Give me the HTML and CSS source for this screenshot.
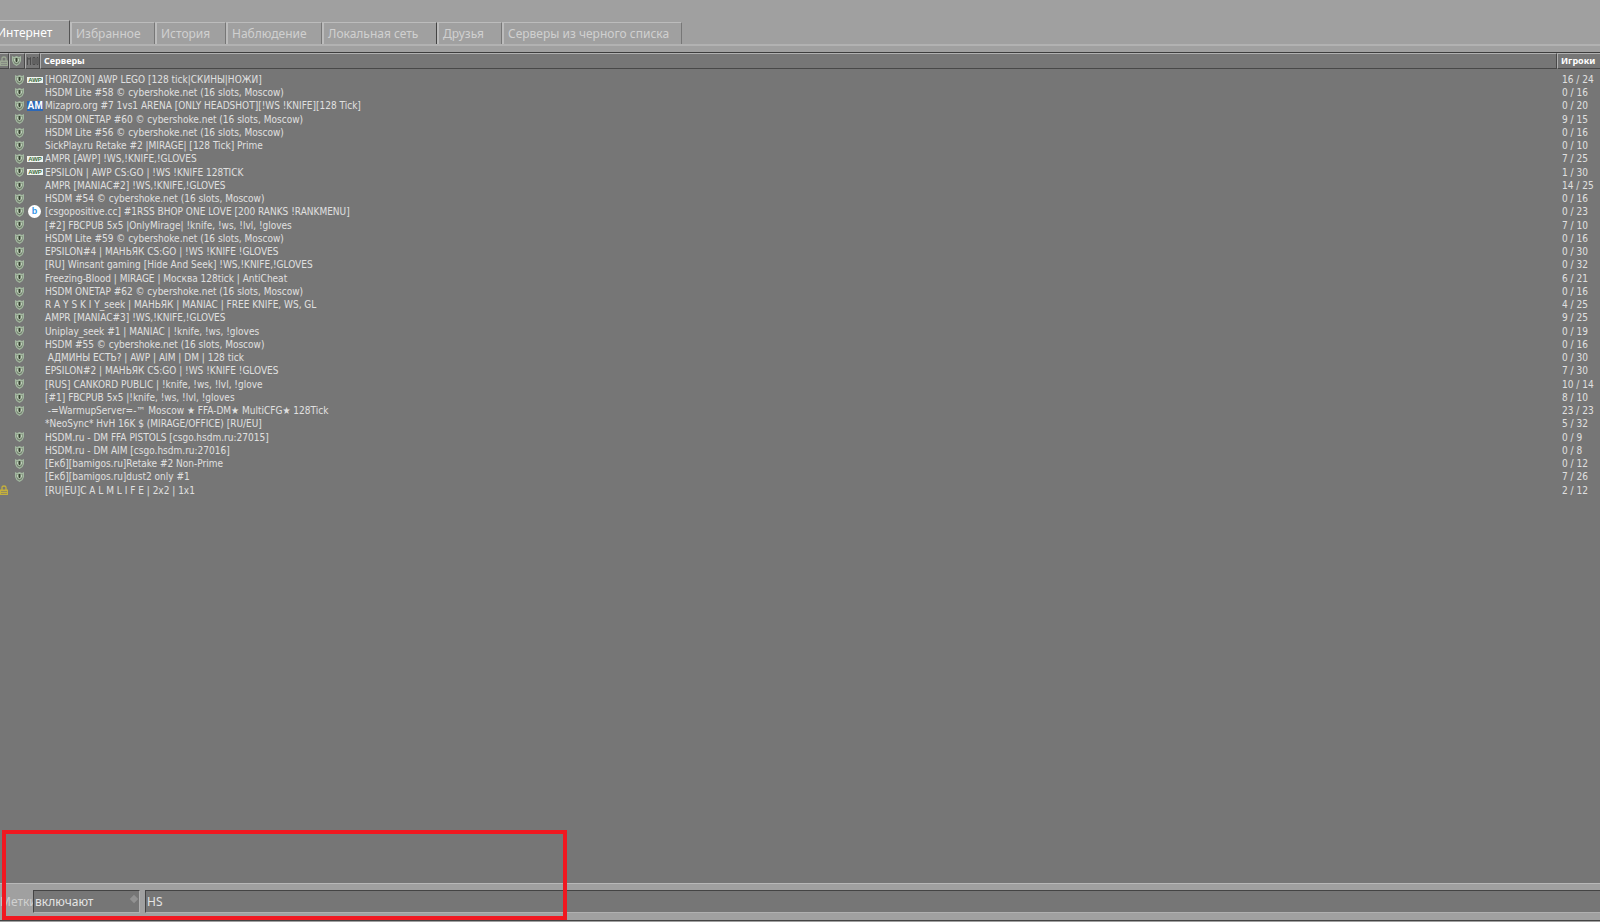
FILE: index.html
```
<!DOCTYPE html>
<html lang="ru">
<head>
<meta charset="utf-8">
<title>Серверы</title>
<link rel="stylesheet" href="styles.css">
</head>
<body>
<svg class="defs" aria-hidden="true">
  <symbol id="shield" viewBox="0 0 9 10"><path d="M0 0 2 1 4.500 0 7 1 9 0V5L7.500 8 4.500 10 1.500 8 0 5Z" fill="#a3b8a0"/><path d="M1.500 2H7.500V5.500L6.500 7.500 4.500 8.500 2.500 7.500 1.500 5.500Z" fill="#75836f"/><path d="M2.500 2.500V5L4.500 7 6.500 5V2.500" stroke="#c0d0bc" fill="none"/><path d="M4.500 2V6" stroke="#34402f"/></symbol>
  <symbol id="lock" viewBox="0 0 8 10"><path d="M2 5V2.500Q2 1 4 1T6 2.500V5" fill="none" stroke="currentColor" stroke-width="1.300"/><path d="M0 4.500H8V10H0Z" fill="currentColor"/><path d="M1 6.500H7M1 8.500H7" stroke="#767676" stroke-width=".6"/></symbol>
</svg>
<nav class="tabs">
  <button class="tab tab-active">Интернет</button>
  <button class="tab tab-favorites">Избранное</button>
  <button class="tab tab-history">История</button>
  <button class="tab tab-spectate">Наблюдение</button>
  <button class="tab tab-lan">Локальная сеть</button>
  <button class="tab tab-friends">Друзья</button>
  <button class="tab tab-blacklist">Серверы из черного списка</button>
</nav>
<main class="list">
  <table class="servers">
    <colgroup><col class="col-lock"><col class="col-vac"><col class="col-mod"><col><col class="col-players"></colgroup>
    <thead><tr>
      <th class="h-lock"><svg class="lock"><use href="#lock"/></svg></th>
      <th class="h-vac"><svg class="shield"><use href="#shield"/></svg></th>
      <th class="h-mod"><svg class="mod" viewBox="0 0 14 10"><path d="M1.500 9V1.500L3 3.500 4.500 1.500V9M7 1.500H9V8.500H7ZM11 1.500H12L13 2.500V7.500L12 8.500H11Z" fill="none" stroke="#4c4c4c"/></svg></th>
      <th>Серверы</th>
      <th>Игроки</th>
    </tr></thead>
    <tbody id="rows"></tbody>
  </table>
</main>
<footer class="filter">
  <label class="label" for="mode">Метки</label>
  <span class="picker"><select id="mode" class="field"><option>включают</option></select></span>
  <input class="field tags" type="text" value="HS" aria-label="Метки">
</footer>
<div class="highlight"></div>
<script src="rows.js"></script>
</body>
</html>
```
FILE: styles.css
```
* { box-sizing: border-box; }
body {
  margin: 0;
  min-height: 100vh;
  display: flex;
  flex-direction: column;
  position: relative;
  overflow-x: hidden;
  background: #a0a0a0;
  color: #e0e0e0;
  font-family: "DejaVu Sans Condensed", "DejaVu Sans", sans-serif;
  font-size: 10px;
}
.defs { position: absolute; width: 0; height: 0; }
.tabs {
  display: flex;
  align-items: flex-end;
  margin-bottom: 6px;
  padding-top: 20px;
  border-bottom: 2px solid #b2b2b2;
  font-family: "Noto Sans", sans-serif;
  font-size: 12px;
}
.tab {
  height: 22px;
  padding: 0 0 0 4px;
  border: 1px solid #bcbcbc;
  border-left-width: 2px;
  border-right: 1px solid #777;
  border-bottom: 0;
  background: none;
  color: #d0d0d0;
  font: inherit;
  text-align: left;
  white-space: nowrap;
}
.tab-active { width: 78px; height: 24px; margin-left: -8px; padding-left: 3px; color: #fff; border-right-color: #555; }
.tab-favorites { width: 85px; }
.tab-history { width: 71px; }
.tab-spectate { width: 96px; }
.tab-lan { width: 115px; border-right-color: #444; }
.tab-friends { width: 65px; }
.tab-blacklist { width: 180px; }
.list {
  flex: 1;
  background: #767676;
  border-top: 1px solid #3c3c3c;
}
.servers { width: 100%; table-layout: fixed; border-collapse: separate; border-spacing: 0; }
.col-lock { width: 9px; }
.col-vac { width: 16px; }
.col-mod { width: 15px; }
.col-players { width: 43px; }
th {
  height: 16px;
  padding: 0 0 0 3px;
  border-top: 1px solid #b0b0b0;
  border-bottom: 1px solid #484848;
  border-left: 1px solid #b0b0b0;
  color: #fff;
  font-family: "Noto Sans", sans-serif;
  font-size: 9px;
  font-weight: bold;
  line-height: 14px;
  text-align: left;
}
th:not(:last-child) { border-right: 1px solid #484848; }
.h-lock { padding: 0; border-left: 0; color: #9ca894; }
.h-vac { padding-left: 2px; }
.h-mod { padding: 0; }
tbody::before { content: ""; display: table-row; height: 4px; }
td {
  height: 13px;
  padding: 0;
  line-height: 13px;
  white-space: pre;
}
tr:nth-child(4n) td { height: 14px; }
.name { padding-left: 5px; }
.players { padding-left: 5px; }
.vac { padding-left: 6px; }
.modcell { padding-left: 2px; overflow: visible; }
svg { display: block; overflow: visible; }
.shield { width: 9px; height: 10px; }
.lock { width: 8px; height: 10px; }
.locked { color: #c4b03c; }
.mod { width: 14px; height: 10px; }
.badge { display: block; width: 16px; font-weight: bold; text-align: center; font-family: "Liberation Sans", sans-serif; }
.awp { height: 6px; line-height: 6px; font-size: 6px; background: #f0f5f0; color: #3d6b3d; }
.am { height: 10px; line-height: 10px; font-size: 10px; background: #2c68b8; color: #fff; }
.bhop { width: 13px; height: 13px; margin-left: 1px; line-height: 13px; font-size: 9px; border-radius: 50%; background: #fff; color: #3596e8; }
.filter {
  display: flex;
  align-items: center;
  height: 38px;
  padding-bottom: 1px;
  border-top: 1px solid #b8b8b8;
  border-bottom: 1px solid #444;
  margin-bottom: 1px;
  font-family: "Noto Sans", sans-serif;
  font-size: 12px;
}
.label { width: 33px; white-space: nowrap; color: #d0d0d0; }
.field {
  height: 23px;
  padding: 0 1px;
  border: 1px solid #b0b0b0;
  border-top-color: #444;
  border-left-color: #444;
  border-radius: 0;
  background: #767676;
  color: #e4e4e4;
  font: inherit;
  appearance: none;
}
.picker { position: relative; width: 107px; margin-right: 5px; }
.picker .field { display: block; width: 100%; }
.picker::after {
  content: "";
  position: absolute;
  top: 6px;
  right: 3px;
  width: 6px;
  height: 6px;
  background: #929292;
  transform: rotate(45deg);
  pointer-events: none;
}
.tags { flex: 1; min-width: 0; border-right: 0; }
.highlight {
  position: absolute;
  left: 2px;
  bottom: 2px;
  width: 565px;
  height: 90px;
  border: 4px solid #f01820;
  pointer-events: none;
}
```
FILE: rows.js
```
const servers = [
  ["[HORIZON] AWP LEGO [128 tick|СКИНЫ|НОЖИ]", "16 / 24", "awp"],
  ["HSDM Lite #58 © cybershoke.net (16 slots, Moscow)", "0 / 16"],
  ["Mizapro.org #7 1vs1 ARENA [ONLY HEADSHOT][!WS !KNIFE][128 Tick]", "0 / 20", "am"],
  ["HSDM ONETAP #60 © cybershoke.net (16 slots, Moscow)", "9 / 15"],
  ["HSDM Lite #56 © cybershoke.net (16 slots, Moscow)", "0 / 16"],
  ["SickPlay.ru Retake #2 |MIRAGE| [128 Tick] Prime", "0 / 10"],
  ["AMPR [AWP] !WS,!KNIFE,!GLOVES", "7 / 25", "awp"],
  ["EPSILON | AWP CS:GO | !WS !KNIFE 128TICK", "1 / 30", "awp"],
  ["AMPR [MANIAC#2] !WS,!KNIFE,!GLOVES", "14 / 25"],
  ["HSDM #54 © cybershoke.net (16 slots, Moscow)", "0 / 16"],
  ["[csgopositive.cc] #1RSS BHOP ONE LOVE [200 RANKS !RANKMENU]", "0 / 23", "bhop"],
  ["[#2] FBCPUB 5x5 |OnlyMirage| !knife, !ws, !lvl, !gloves", "7 / 10"],
  ["HSDM Lite #59 © cybershoke.net (16 slots, Moscow)", "0 / 16"],
  ["EPSILON#4 | МАНЬЯК CS:GO | !WS !KNIFE !GLOVES", "0 / 30"],
  ["[RU] Winsant gaming [Hide And Seek] !WS,!KNIFE,!GLOVES", "0 / 32"],
  ["Freezing-Blood | MIRAGE | Москва 128tick | AntiCheat", "6 / 21"],
  ["HSDM ONETAP #62 © cybershoke.net (16 slots, Moscow)", "0 / 16"],
  ["R A Y S K I Y_seek | МАНЬЯК | MANIAC | FREE KNIFE, WS, GL", "4 / 25"],
  ["AMPR [MANIAC#3] !WS,!KNIFE,!GLOVES", "9 / 25"],
  ["Uniplay_seek #1 | MANIAC | !knife, !ws, !gloves", "0 / 19"],
  ["HSDM #55 © cybershoke.net (16 slots, Moscow)", "0 / 16"],
  [" АДМИНЫ ЕСТЬ? | AWP | AIM | DM | 128 tick", "0 / 30"],
  ["EPSILON#2 | МАНЬЯК CS:GO | !WS !KNIFE !GLOVES", "7 / 30"],
  ["[RUS] CANKORD PUBLIC | !knife, !ws, !lvl, !glove", "10 / 14"],
  ["[#1] FBCPUB 5x5 |!knife, !ws, !lvl, !gloves", "8 / 10"],
  [" -=WarmupServer=-™ Moscow ★ FFA-DM★ MultiCFG★ 128Tick", "23 / 23"],
  ["*NeoSync* HvH 16K $ (MIRAGE/OFFICE) [RU/EU]", "5 / 32", "", "open"],
  ["HSDM.ru - DM FFA PISTOLS [csgo.hsdm.ru:27015]", "0 / 9"],
  ["HSDM.ru - DM AIM [csgo.hsdm.ru:27016]", "0 / 8"],
  ["[Екб][bamigos.ru]Retake #2 Non-Prime", "0 / 12"],
  ["[Екб][bamigos.ru]dust2 only #1", "7 / 26"],
  ["[RU|EU]C A L M L I F E | 2x2 | 1x1", "2 / 12", "", "locked"]
];
const badgeText = { awp: "AWP", am: "AM", bhop: "b" };
const shield = '<svg class="shield"><use href="#shield"/></svg>';
const lock = '<svg class="lock"><use href="#lock"/></svg>';

document.getElementById("rows").innerHTML = servers.map(([name, players, badge, state]) =>
  `<tr><td class="locked">${state === "locked" ? lock : ""}</td>` +
  `<td class="vac">${state ? "" : shield}</td>` +
  `<td class="modcell">${badge ? `<span class="badge ${badge}">${badgeText[badge]}</span>` : ""}</td>` +
  `<td class="name">${name}</td><td class="players">${players}</td></tr>`
).join("");
```
